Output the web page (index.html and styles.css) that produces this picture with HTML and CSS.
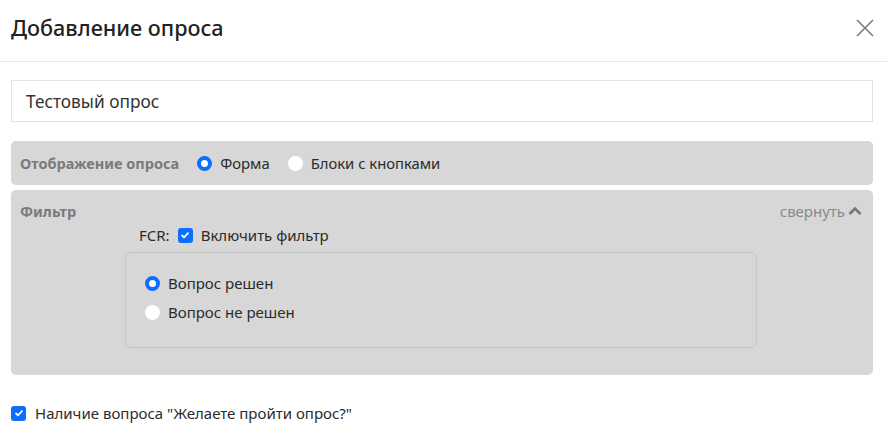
FILE: index.html
```html
<!DOCTYPE html>
<html lang="ru">
<head>
<meta charset="utf-8">
<title>Добавление опроса</title>
<link rel="stylesheet" href="styles.css">
</head>
<body>
<div class="modal">
  <div class="modal-header">
    <h1 class="modal-title">Добавление опроса</h1>
    <button class="close" aria-label="Закрыть">
      <svg width="18" height="18" viewBox="0 0 18 18"><path d="M1 1L17 17M17 1L1 17" stroke="#7a7a7a" stroke-width="1.6" fill="none"/></svg>
    </button>
  </div>
  <div class="modal-body">
    <div class="text-input">Тестовый опрос</div>

    <div class="panel panel-display">
      <span class="panel-label">Отображение опроса</span>
      <label class="opt"><span class="radio checked"></span>Форма</label>
      <label class="opt"><span class="radio"></span>Блоки с кнопками</label>
    </div>

    <div class="panel panel-filter">
      <div class="filter-head">
        <span class="panel-label">Фильтр</span>
        <span class="collapse">свернуть
          <svg width="14" height="10" viewBox="0 0 14 10"><path d="M1.5 8L7 2.5L12.5 8" stroke="#777" stroke-width="2.6" fill="none"/></svg>
        </span>
      </div>
      <div class="fcr-row">
        <span class="fcr">FCR:</span>
        <label class="opt"><span class="check"><svg width="10" height="8" viewBox="0 0 10 8"><path d="M1.5 4L4 6.3L8.5 1.7" stroke="#fff" stroke-width="1.8" fill="none"/></svg></span>Включить фильтр</label>
      </div>
      <div class="filter-box">
        <label class="opt"><span class="radio checked"></span>Вопрос решен</label>
        <label class="opt"><span class="radio"></span>Вопрос не решен</label>
      </div>
    </div>

    <label class="opt bottom-opt"><span class="check"><svg width="10" height="8" viewBox="0 0 10 8"><path d="M1.5 4L4 6.3L8.5 1.7" stroke="#fff" stroke-width="1.8" fill="none"/></svg></span>Наличие вопроса "Желаете пройти опрос?"</label>
  </div>
</div>
</body>
</html>
```

FILE: styles.css
```css
* { box-sizing: border-box; }
html, body { margin: 0; padding: 0; background: #fff; }
body {
  font-family: "Noto Sans", "Open Sans", sans-serif;
  color: #2b2b2b;
  font-size: 15px;
}
.modal { width: 887px; }
.modal-header {
  height: 62px;
  border-bottom: 1px solid #e6e6e6;
  display: flex;
  align-items: center;
  justify-content: space-between;
  padding: 0 13px 6px 11px;
}
.modal-title {
  margin: 0;
  font-size: 21.6px;
  font-weight: 500;
  color: #222;
  line-height: 1;
}
.close {
  border: 0;
  background: none;
  padding: 0;
  width: 18px;
  height: 18px;
  display: flex;
}
.modal-body {
  padding: 18px 14px 0 11px;
}
.text-input {
  height: 42px;
  border: 1px solid #e3e3e3;
  display: flex;
  align-items: center;
  padding-left: 14px;
  font-size: 17.3px;
  color: #333;
}
.panel {
  background: #d7d7d7;
  border-radius: 5px;
}
.panel-display {
  margin-top: 19px;
  height: 44px;
  display: flex;
  align-items: center;
  padding-left: 9px;
  gap: 18px;
}
.panel-label {
  font-weight: 700;
  color: #7a7a7a;
  font-size: 14.5px;
}
.opt {
  display: inline-flex;
  align-items: center;
  gap: 8px;
  color: #2b2b2b;
}
.panel-display .opt { font-size: 14.8px; }
.radio {
  width: 15px;
  height: 15px;
  border-radius: 50%;
  background: #fff;
  flex: none;
}
.radio.checked {
  border: 4.5px solid #0d6efd;
  background: #fff;
}
.check {
  width: 15px;
  height: 15px;
  border-radius: 3px;
  background: #0d6efd;
  display: flex;
  align-items: center;
  justify-content: center;
  flex: none;
}
.panel-filter {
  margin-top: 5px;
  height: 185px;
  padding: 11px 11px 0 9px;
}
.filter-head {
  display: flex;
  justify-content: space-between;
  align-items: center;
  height: 20px;
}
.collapse {
  color: #8a8a8a;
  font-size: 15px;
  display: inline-flex;
  align-items: center;
  gap: 3px;
}
.fcr-row {
  display: flex;
  align-items: center;
  margin-left: 119px;
  margin-top: 4px;
  gap: 8px;
}
.fcr { color: #2b2b2b; }
.filter-box {
  margin-top: 7px;
  margin-left: 105px;
  width: 632px;
  height: 96px;
  border: 1px solid #c6c6c6;
  border-radius: 6px;
  padding: 20px 0 0 19px;
  display: flex;
  flex-direction: column;
  align-items: flex-start;
  gap: 9px;
}
.bottom-opt {
  margin-top: 28px;
  gap: 9px;
}
```
